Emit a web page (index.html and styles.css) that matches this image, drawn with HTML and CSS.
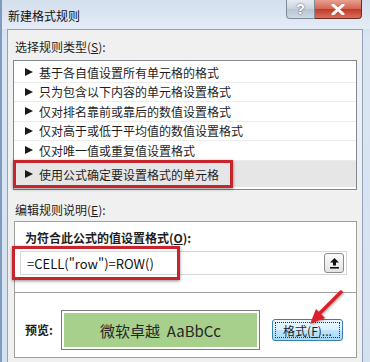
FILE: index.html
```html
<!DOCTYPE html>
<html lang="zh">
<head>
    <meta charset="UTF-8">
    <title>新建格式规则</title>
    <link rel="stylesheet" href="styles.css">
</head>
<body>
    <div class="window">
        <div class="titlebar">
            <div class="title">新建格式规则</div>
            <div class="caption-buttons">
                <div class="btn-help">?</div>
                <div class="btn-close">
                    <svg width="16" height="11" viewBox="0 0 16 11">
                        <path d="M3 1 L13 10 M13 1 L3 10" stroke="#fff" stroke-width="3" stroke-linecap="round"/>
                    </svg>
                </div>
            </div>
        </div>

        <div class="client">
            <div class="label">选择规则类型(<u>S</u>):</div>

            <div class="rule-list">
                <div class="rule"><span class="tri"></span>基于各自值设置所有单元格的格式</div>
                <div class="rule"><span class="tri"></span>只为包含以下内容的单元格设置格式</div>
                <div class="rule"><span class="tri"></span>仅对排名靠前或靠后的数值设置格式</div>
                <div class="rule"><span class="tri"></span>仅对高于或低于平均值的数值设置格式</div>
                <div class="rule"><span class="tri"></span>仅对唯一值或重复值设置格式</div>
                <div class="rule selected"><span class="tri"></span>使用公式确定要设置格式的单元格</div>
                <div class="mark mark-rule"></div>
            </div>

            <div class="label label-edit">编辑规则说明(<u>E</u>):</div>

            <div class="group">
                <div class="formula-section">
                    <div class="bold-label">为符合此公式的值设置格式(<u>O</u>):</div>
                    <div class="formula-input">
                        <span class="formula-text">=CELL("row")=ROW()</span>
                        <div class="ref-btn">
                            <svg width="11" height="12" viewBox="0 0 11 12">
                                <polygon points="5.5,1 10,5.5 7,5.5 7,8.5 4,8.5 4,5.5 1,5.5" fill="#111"/>
                                <rect x="1" y="10" width="9" height="1.6" fill="#111"/>
                            </svg>
                        </div>
                        <div class="mark mark-formula"></div>
                    </div>
                </div>
                <div class="preview-section">
                    <div class="bold-label preview-label">预览:</div>
                    <div class="preview-box">
                        <div class="preview-fill">微软卓越&nbsp;&nbsp;AaBbCc</div>
                    </div>
                    <div class="format-btn"><span>格式(<u>F</u>)...</span></div>
                </div>
            </div>
        </div>

        <svg class="arrow" width="370" height="362" viewBox="0 0 370 362">
            <defs>
                <filter id="shadow" x="-20%" y="-20%" width="140%" height="140%">
                    <feDropShadow dx="1" dy="1" stdDeviation="1" flood-color="#000" flood-opacity="0.35"/>
                </filter>
            </defs>
            <g filter="url(#shadow)">
                <path d="M341 292 L320 313" stroke="#d8232a" stroke-width="3.5" stroke-linecap="round"/>
                <polygon points="310,324 325,318 316,309" fill="#d8232a"/>
            </g>
        </svg>
    </div>
</body>
</html>
```

FILE: styles.css
```css
body {
    margin: 0;
    background: #fff;
    font-family: "Noto Sans CJK SC", "Liberation Sans", sans-serif;
    font-size: 12px;
    color: #1e1e1e;
}

.window {
    position: relative;
    width: 370px;
    height: 362px;
    overflow: hidden;
    display: flex;
    flex-direction: column;
    box-sizing: border-box;
    border-left: 2px solid #7f9bbd;
    background: linear-gradient(to bottom, #c9d8ea, #dbe6f3 40px, #d4e1ef);
}

.titlebar {
    height: 29px;
    display: flex;
    align-items: center;
    padding-left: 6px;
    background: linear-gradient(to bottom, #d3dfed, #e4ecf6);
}

.title {
    font-size: 12px;
    color: #111;
    padding-top: 1px;
}

.caption-buttons {
    margin-left: auto;
    margin-right: 8px;
    align-self: flex-start;
    display: flex;
}

.btn-help {
    width: 27px;
    height: 18px;
    border: 1px solid #7d8a9a;
    border-top: none;
    border-radius: 0 0 0 4px;
    background: linear-gradient(to bottom, #e6ebf1, #c9d3de 50%, #b7c4d3 51%, #cfd9e4);
    color: #fff;
    font-family: "Liberation Sans", sans-serif;
    font-weight: bold;
    font-size: 14px;
    line-height: 18px;
    text-align: center;
    text-shadow: 0 0 2px #445;
}

.btn-close {
    width: 46px;
    height: 18px;
    border: 1px solid #6e2a22;
    border-top: none;
    border-left: none;
    border-radius: 0 0 4px 0;
    background: linear-gradient(to bottom, #e8a090, #d2644f 50%, #c0392a 51%, #d5705a);
    display: flex;
    align-items: center;
    justify-content: center;
}

.client {
    flex: 1;
    margin: 0 7px 0 5px;
    padding: 0 5px;
    background: #f0f0f0;
    border: 1px solid #8fa3ba;
    border-bottom: none;
}

.label {
    line-height: 20px;
    margin: 7px 0 3px 2px;
}

.label-edit {
    margin: 10px 0 1px 2px;
}

.rule-list {
    position: relative;
    height: 130px;
    box-sizing: border-box;
    border: 1px solid #828790;
    background: #fff;
    padding-top: 2px;
}

.rule {
    display: flex;
    align-items: center;
    height: 19.5px;
    padding-left: 11px;
    border-bottom: 1px solid #ececec;
    box-sizing: border-box;
}

.rule.selected {
    height: 26px;
    padding-top: 1px;
    background: #e6e6e6;
    border-bottom: none;
}

.tri {
    width: 0;
    height: 0;
    border-left: 8px solid #1a1a1a;
    border-top: 4px solid transparent;
    border-bottom: 4px solid transparent;
    margin-right: 6px;
}

.mark {
    position: absolute;
    border: 3px solid #c7242b;
    box-shadow: 0 1px 3px rgba(0, 0, 0, 0.45);
    pointer-events: none;
}

.mark-rule {
    left: -1px;
    top: 99px;
    width: 214px;
    height: 22px;
}

.group {
    margin-left: 1px;
    border: 1px solid #a0a0a0;
    background: #fff;
    height: 135px;
}

.formula-section {
    padding: 6px 9px 17px 10px;
    border-bottom: 1px solid #a0a0a0;
}

.bold-label {
    font-weight: bold;
    line-height: 20px;
}

.formula-input {
    position: relative;
    margin: 3px 0 0 -5px;
    height: 24px;
    box-sizing: border-box;
    border: 1px solid #d6d6d6;
    display: flex;
    align-items: center;
    padding-left: 6px;
}

.formula-text {
    font-size: 13px;
    color: #111;
}

.ref-btn {
    margin-left: auto;
    margin-right: 2px;
    width: 20px;
    height: 20px;
    box-sizing: border-box;
    border: 1px solid #8a8a8a;
    border-radius: 3px;
    background: linear-gradient(to bottom, #fafafa, #e4e4e4);
    display: flex;
    align-items: center;
    justify-content: center;
}

.mark-formula {
    left: -9px;
    top: -6px;
    width: 162px;
    height: 28px;
}

.preview-section {
    display: flex;
    align-items: center;
    padding: 17px 0 0 10px;
}

.preview-label {
    width: 36px;
}

.preview-box {
    width: 199px;
    height: 40px;
    box-sizing: border-box;
    border: 1px solid #7a7a7a;
    padding: 2px;
    background: #fff;
}

.preview-fill {
    height: 100%;
    background: #a8d08d;
    display: flex;
    align-items: center;
    justify-content: center;
    font-size: 15px;
    color: #262626;
}

.format-btn {
    margin-left: 12px;
    width: 71px;
    height: 22px;
    box-sizing: border-box;
    border: 1px solid #3c7fb1;
    border-radius: 3px;
    background: linear-gradient(to bottom, #eaf6fd, #d9f0fc 50%, #bee6fd 51%, #a7d9f5);
    display: flex;
    align-items: center;
    justify-content: center;
    outline: 1px dotted #333;
    outline-offset: -4px;
}

.arrow {
    position: absolute;
    left: -2px;
    top: 0;
    pointer-events: none;
}
```
